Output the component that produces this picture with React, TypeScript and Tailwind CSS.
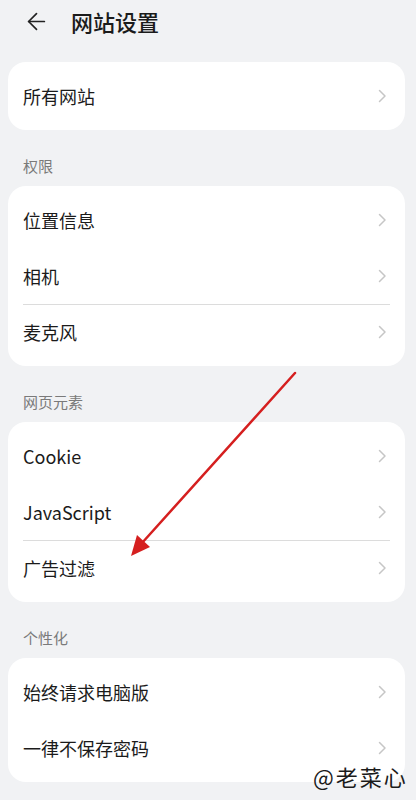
import { ArrowLeft } from "lucide-react"

type Section = {
  label?: string
  rows: string[]
  divider?: number
}

const sections: Section[] = [
  { rows: ["所有网站"] },
  { label: "权限", rows: ["位置信息", "相机", "麦克风"], divider: 2 },
  { label: "网页元素", rows: ["Cookie", "JavaScript", "广告过滤"], divider: 2 },
  { label: "个性化", rows: ["始终请求电脑版", "一律不保存密码"] },
]

const Chevron = () => (
  <svg width="9" height="14" viewBox="0 0 9 14" fill="none">
    <path d="M1.5 1.5 L7 7 L1.5 12.5" stroke="#c6c6c6" strokeWidth="1.5" strokeLinecap="round" strokeLinejoin="round" />
  </svg>
)

const Row = ({ title, divider }: { title: string; divider: boolean }) => (
  <div className="relative flex h-[56px] items-center justify-between pl-[15px] pr-[18px]">
    {divider && <div className="absolute left-[15px] right-[15px] top-0 h-px bg-[#dcdcdc]" />}
    <span className="text-[18px] text-[#1b1b1b]">{title}</span>
    <Chevron />
  </div>
)

const App = () => {
  return (
    <div
      className="relative h-[800px] w-[416px] overflow-hidden bg-[#f1f2f4]"
      style={{ fontFamily: '"Noto Sans CJK SC", "Noto Sans", sans-serif' }}
    >
      <div className="flex h-[42px] items-center pl-[23px]">
        <ArrowLeft size={27} strokeWidth={1.5} className="text-[#222]" />
        <span className="ml-[21px] text-[22px] font-medium text-[#1b1b1b]">网站设置</span>
      </div>

      <div className="mt-[20px] pl-[8px] pr-[11px]">
        {sections.map((sec, i) => (
          <div key={i}>
            {sec.label && (
              <div className="pb-[10px] pl-[15px] pt-[26px] text-[15px] leading-[20px] text-[#7a7a7a]">
                {sec.label}
              </div>
            )}
            <div className="rounded-[18px] bg-white py-[6px]">
              {sec.rows.map((r, j) => (
                <Row key={r} title={r} divider={sec.divider === j} />
              ))}
            </div>
          </div>
        ))}
      </div>

      {/* red annotation arrow */}
      <svg className="pointer-events-none absolute left-0 top-0" width="416" height="800">
        <line x1="295" y1="373" x2="142" y2="543" stroke="#d51f1f" strokeWidth="2.5" strokeLinecap="round" />
        <polygon points="131,556 137,535 150,547" fill="#d51f1f" />
      </svg>

      <div
        className="absolute left-[313px] top-[760px] whitespace-nowrap text-[22px] tracking-[2px] text-[#1b1b1b]"
        style={{ fontFamily: '"Noto Sans CJK SC", serif' }}
      >
        @老菜心
      </div>
    </div>
  )
}

export default App
